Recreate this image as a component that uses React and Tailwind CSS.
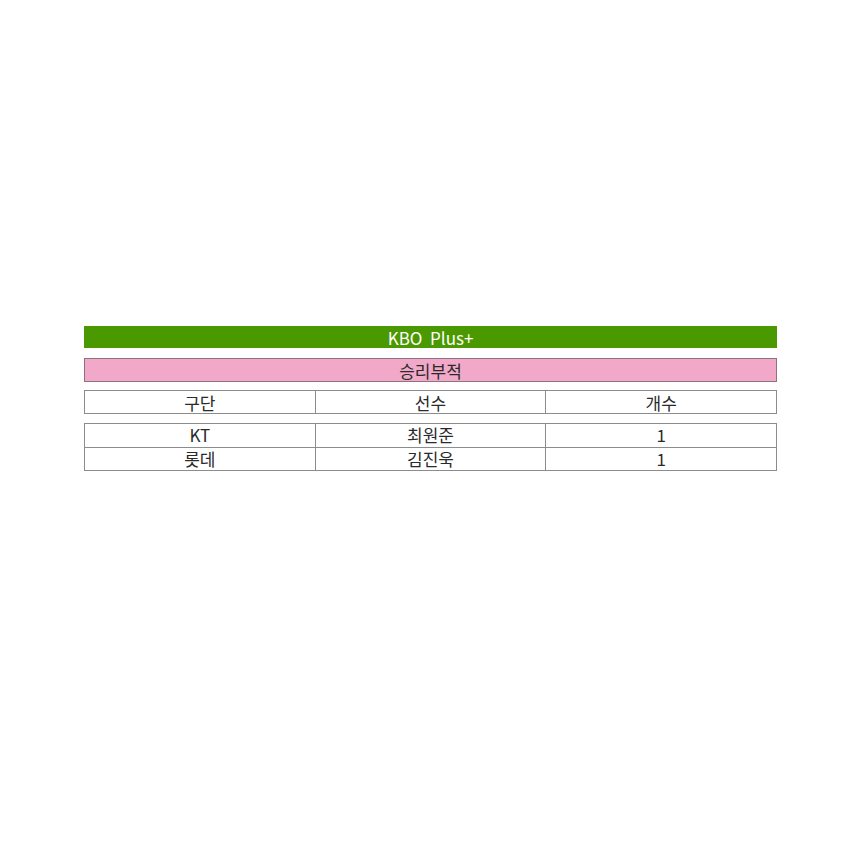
const rows = [
    { team: 'KT', player: '최원준', count: '1' },
    { team: '롯데', player: '김진욱', count: '1' },
];

const Cell = ({ children, last, lift }) => (
    <div className={`flex-1 flex items-center justify-center ${lift ? 'pb-[2px]' : ''} ${last ? '' : 'border-r border-[#8c8c8c]'}`}>
        {children}
    </div>
);

export default function App() {
    return (
        <div
            className="w-[856px] h-[856px] bg-white pt-[326px] text-[17px] text-[#2a2a2a]"
            style={{ fontFamily: '"Noto Sans CJK KR", "Noto Sans", sans-serif' }}
        >
            <div className="ml-[84px] w-[693px] flex flex-col">
                <div className="h-[22px] bg-[#4b9900] text-white flex items-center justify-center leading-none whitespace-pre">
                    KBO  Plus+
                </div>
                <div className="mt-[10px] h-[24px] bg-[#f2a9c9] border border-[#8a7480] flex items-center justify-center leading-none">
                    승리부적
                </div>
                <div className="mt-[8px] h-[24px] border border-[#8c8c8c] flex leading-none">
                    <Cell>구단</Cell>
                    <Cell>선수</Cell>
                    <Cell last>개수</Cell>
                </div>
                <div className="mt-[9px] border border-[#8c8c8c] flex flex-col leading-none">
                    {rows.map((r, i) => (
                        <div key={i} className={`h-[23px] flex ${i > 0 ? 'border-t border-[#8c8c8c]' : ''}`}>
                            <Cell lift>{r.team}</Cell>
                            <Cell lift>{r.player}</Cell>
                            <Cell lift last>{r.count}</Cell>
                        </div>
                    ))}
                </div>
            </div>
        </div>
    );
}
